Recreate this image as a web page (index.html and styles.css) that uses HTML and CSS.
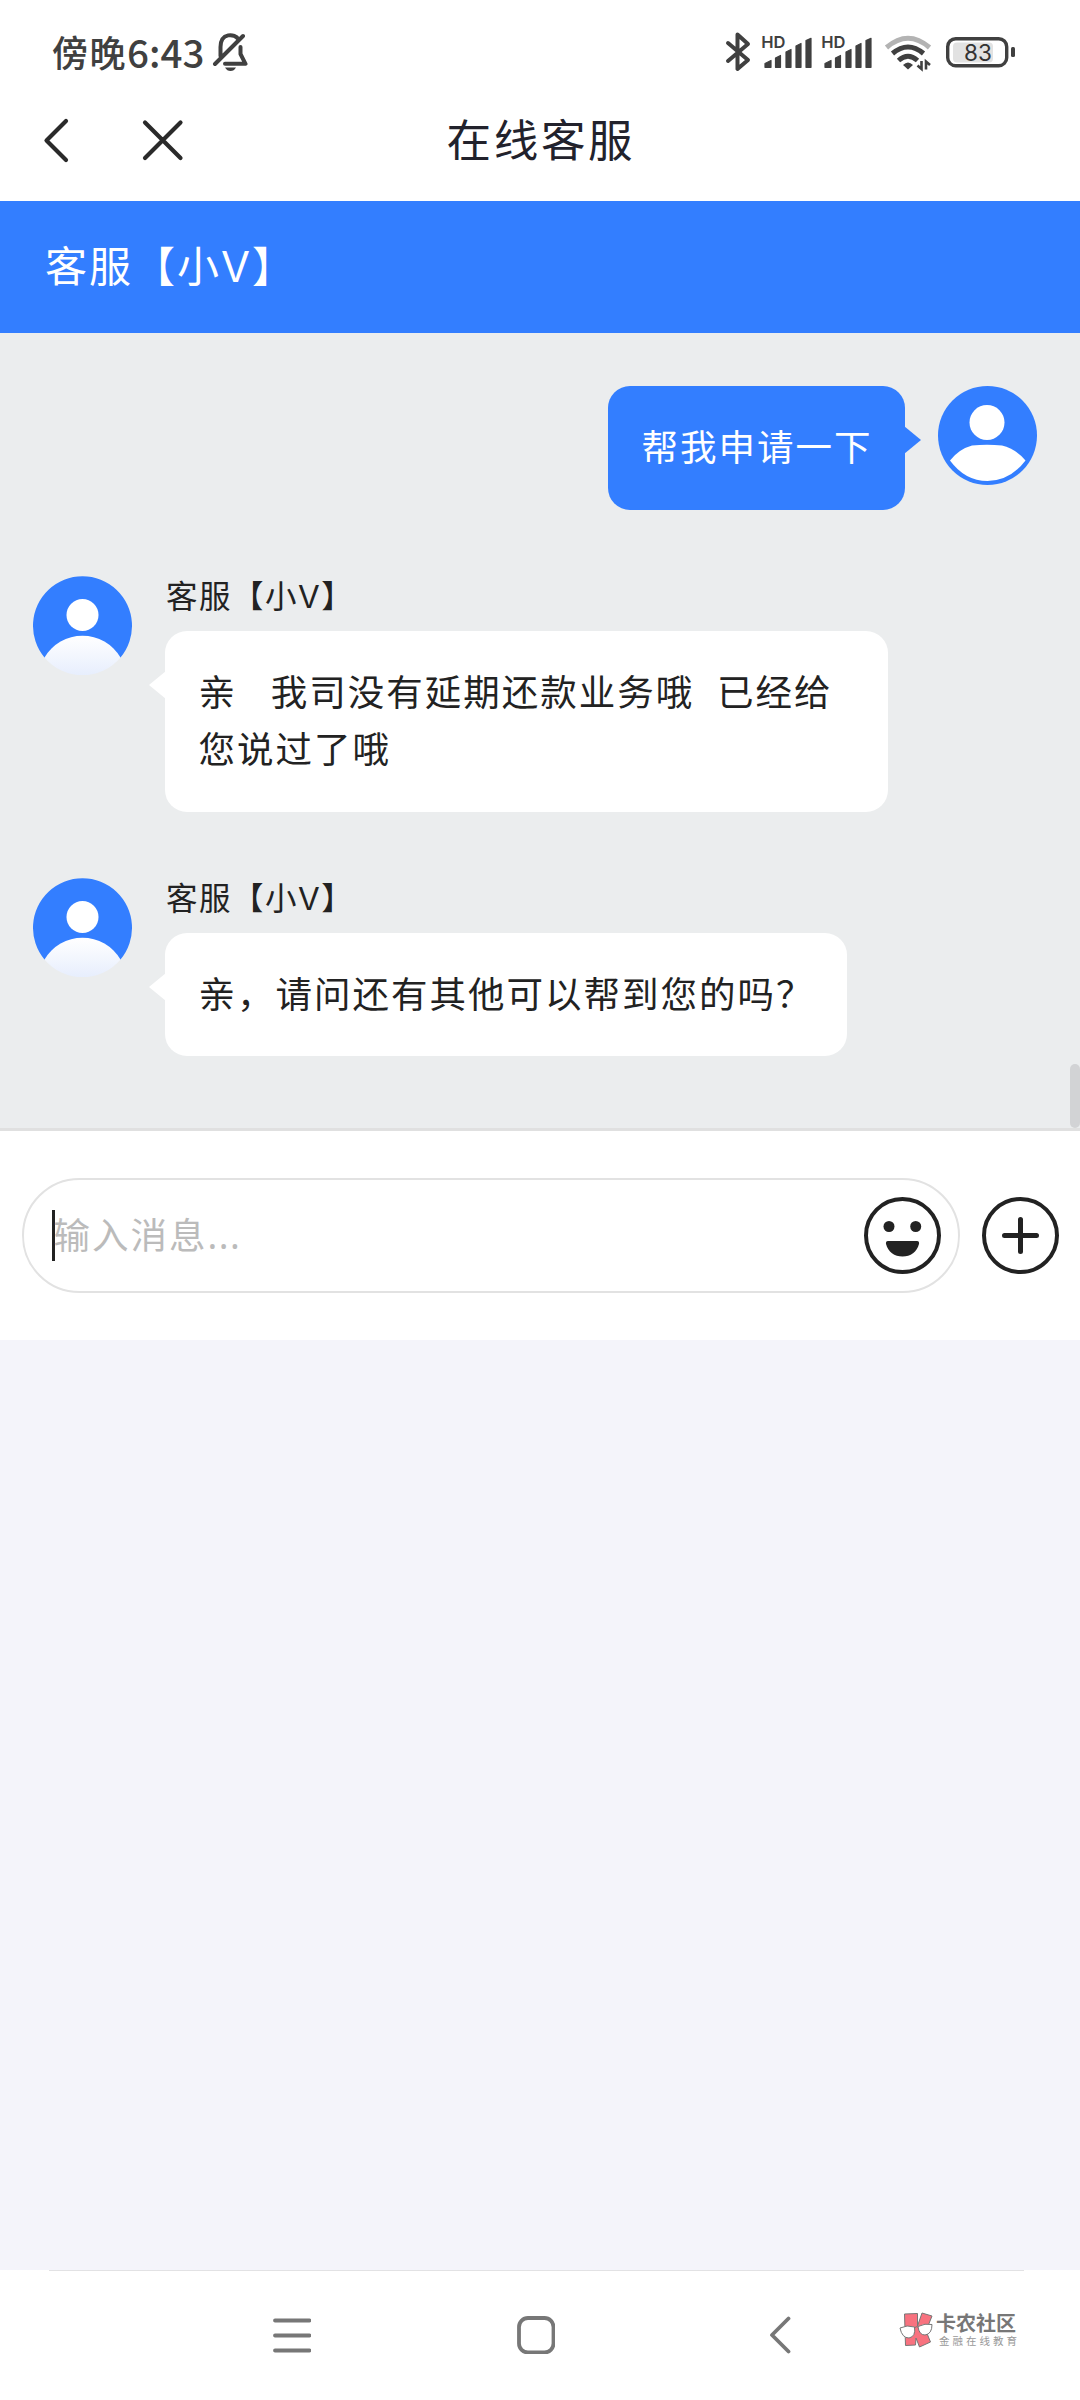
FILE: index.html
```
<!DOCTYPE html>
<html lang="zh-CN">
<head>
<meta charset="utf-8">
<title>在线客服</title>
<link rel="stylesheet" href="styles.css">
</head>
<body>
<div class="phone">
  <header class="status">
    <div class="clock"><span class="clock-zh">傍晚</span><span class="clock-num">6:43</span></div>
    <svg class="bell" width="36" height="40" viewBox="212 33 36 40" fill="none" stroke="#404040" stroke-width="4" stroke-linecap="round" stroke-linejoin="round">
      <path d="M220.500 56V47C220.500 32.500 235 33 238.500 39.500M240.500 47V54L245.500 63.800H225M215 64L243 36"/>
      <path d="M225 67.500H236Q234 71 230.500 71T225 67.500Z" fill="#404040" stroke="none"/>
    </svg>
    <div class="status-icons">
      <svg class="bt" width="26" height="42" viewBox="725 31 26 42" fill="none" stroke="#404040" stroke-width="4" stroke-linecap="round" stroke-linejoin="round"><path d="M728 43L748 60L737.500 69V34.500L748 44L728 61"/></svg>
      <svg class="signal" width="52" height="42" viewBox="761 31 52 42"><text x="761.200" y="48" class="hd">HD</text><path d="M765 67.300V63.500L771 60.500V67.300ZM775.500 67.300V58L780.500 55.500V67.300ZM786 67.300V52L791 49.500V67.300ZM796 67.300V46L801 43.500V67.300ZM806 67.300V40.500L811 38.300V67.300Z"/></svg>
      <svg class="signal" width="52" height="42" viewBox="761 31 52 42"><text x="761.200" y="48" class="hd">HD</text><path d="M765 67.300V63.500L771 60.500V67.300ZM775.500 67.300V58L780.500 55.500V67.300ZM786 67.300V52L791 49.500V67.300ZM796 67.300V46L801 43.500V67.300ZM806 67.300V40.500L811 38.300V67.300Z"/></svg>
      <svg class="wifi" width="50" height="42" viewBox="883 31 50 42" fill="none" stroke="#404040" stroke-width="5">
        <path d="M886.500 47.500Q908 29 929.500 47.500" stroke="#b3b3b3"/><path d="M892.500 53.500Q908 40.500 923.500 53.500M898.500 60.500Q908 52 917.500 60.500"/>
        <path d="M903 65Q908 60 913 65L908 69.500Z" fill="#404040" stroke="none"/>
        <path d="M921.500 61V69L917.500 65.500M926 69.500V61.500L930 65" stroke-width="2.600"/>
      </svg>
      <svg class="battery" width="72" height="42" viewBox="944 31 72 42"><rect x="953" y="42.500" width="40" height="20" rx="4" fill="#e2e2e2"/><rect x="947.700" y="38.700" width="59" height="27" rx="8" fill="none" stroke="#404040" stroke-width="3.400"/><rect x="1011" y="47" width="4" height="10" rx="1.500" fill="#404040"/><text x="978" y="60.500" text-anchor="middle" class="pct">83</text></svg>
    </div>
  </header>

  <nav class="nav">
    <svg class="nav-back" width="30" height="50" viewBox="42 115 30 50"><path d="M66 121L46.500 140.500L66 160"/></svg>
    <svg class="nav-close" width="44" height="44" viewBox="141 118 44 44"><path d="M145 122.500L180.500 158M180.500 122.500L145 158"/></svg>
    <h1 class="title">在线客服</h1>
  </nav>

  <div class="agent-bar">客服【小<span class="v">V</span>】</div>

  <main class="chat">
    <section class="msg mine">
      <div class="bubble">帮我申请一下</div>
      <svg class="avatar" viewBox="0 0 99 99"><circle cx="49.500" cy="49.500" r="49.500" fill="#337eff"/><circle cx="49" cy="36.500" r="17.500" fill="#fff"/><path d="M12 74.500Q21 63 34 59.500Q49 58 64 59.500Q78 63 87.500 74.500Q72 95 49.500 95Q27 95 12 74.500Z" fill="#fff"/></svg>
    </section>
    <section class="msg">
      <svg class="avatar" viewBox="0 0 99 99"><defs><linearGradient id="body" x1="0" y1="0" x2="0" y2="1"><stop offset="0" stop-color="#fff"/><stop offset="1" stop-color="#e7eefd"/></linearGradient></defs><path d="M11.500 81.500A49.500 49.500 0 1 1 87.500 81.500Z" fill="#337eff"/><circle cx="49.500" cy="39" r="16" fill="#fff"/><path d="M11.500 81.500A44 44 0 0 1 87.500 81.500A49.500 49.500 0 0 1 11.500 81.500Z" fill="url(#body)"/></svg>
      <div class="content"><div class="name">客服【小<span class="v">V</span>】</div><div class="bubble">亲   我司没有延期还款业务哦  已经给
您说过了哦</div></div>
    </section>
    <section class="msg">
      <svg class="avatar" viewBox="0 0 99 99"><path d="M11.500 81.500A49.500 49.500 0 1 1 87.500 81.500Z" fill="#337eff"/><circle cx="49.500" cy="39" r="16" fill="#fff"/><path d="M11.500 81.500A44 44 0 0 1 87.500 81.500A49.500 49.500 0 0 1 11.500 81.500Z" fill="url(#body)"/></svg>
      <div class="content"><div class="name">客服【小<span class="v">V</span>】</div><div class="bubble">亲，请问还有其他可以帮到您的吗？</div></div>
    </section>
    <div class="thumb"></div>
  </main>

  <div class="composer">
    <div class="field">
      <i class="caret"></i><span class="placeholder">输入消息<span class="dots">...</span></span>
      <svg class="round" viewBox="0 0 77 77"><circle cx="38.500" cy="38.500" r="36.500"/><g fill="#222" stroke="none"><circle cx="25" cy="29.500" r="5.500"/><circle cx="51.700" cy="29.500" r="5.500"/><path d="M24 44H53Q55.500 44 55 47C53 55 46.500 59.500 38.500 59.500S24 55 22 47Q21.500 44 24 44Z"/></g></svg>
    </div>
    <svg class="round" viewBox="0 0 77 77"><circle cx="38.500" cy="38.500" r="36.500"/><path d="M38.500 22.500V54.500M22.500 38.500H54.500" stroke-width="5"/></svg>
  </div>

  <div class="blank"></div>

  <footer class="sysbar">
    <svg class="s-menu" width="38" height="38" viewBox="0 0 38 38"><path d="M2 4.500H36.500M2 19.500H36.500M2 34.500H36.500"/></svg>
    <svg class="s-home" width="38" height="38" viewBox="0 0 38 38"><rect x="2" y="2" width="34.500" height="34.500" rx="9"/></svg>
    <svg class="s-back" width="22" height="38" viewBox="0 0 22 38"><path d="M19.500 2.500L3 19L19.500 35.500"/></svg>
    <div class="brand">
      <svg width="36" height="38" viewBox="0 0 36 38" fill="#f8727f" stroke="#777" stroke-width="1">
        <path d="M5.500 3L18.500 2.500V15L23 2L33 5L27 20L31.500 31L20.500 36L17 27L16.500 34L6.500 34.500Z"/>
        <path d="M1 17Q8 13.500 15.500 16Q17 25.500 10 27Q3 27 1 17ZM19 15.500Q26 12 33 13.500Q33 23 26 24Q20 24 19 15.500Z" fill="#fff"/><path d="M15.500 17Q17 15 19 16" fill="none"/>
      </svg>
      <div class="brand-text"><div class="brand-name">卡农社区</div><div class="brand-sub">金融在线教育</div></div>
    </div>
  </footer>
</div>
</body>
</html>
```
FILE: styles.css
```
* { box-sizing: border-box; }
body { margin: 0; background: #fff; font-family: "Noto Sans CJK SC", sans-serif; color: #222; }
svg { display: block; flex: none; }
.phone { width: 1080px; height: 2400px; display: flex; flex-direction: column; overflow: hidden; }

.status { height: 80px; padding: 31px 64px 0 52px; display: flex; align-items: flex-start; color: #404040; }
.clock { display: flex; line-height: 40px; width: 160px; font-weight: 500; white-space: nowrap; }
.clock-zh { font-size: 36px; letter-spacing: 1.500px; }
.clock-num { font-size: 38.500px; }
.bell { margin-top: 2px; }
.status-icons { margin-left: auto; display: flex; }
.signal { margin-left: 8px; fill: #404040; }
.signal path { stroke: #404040; stroke-width: 1.200; stroke-linejoin: round; }
.bt + .signal { margin-left: 10px; }
.wifi { margin-left: 10px; }
.battery { margin-left: 11px; }
.hd { font: 600 16.500px Inter, sans-serif; }
.pct { font: 400 22.500px Inter, sans-serif; fill: #333; }

.nav { height: 121px; display: flex; align-items: center; padding: 0 0 1px 42px; }
.nav svg { fill: none; stroke: #2a2a2a; stroke-width: 4.200; stroke-linecap: round; stroke-linejoin: round; }
.nav-close { margin-left: 69px; }
.title { margin: -5px 0 0 261.500px; font-size: 44.500px; font-weight: 400; letter-spacing: 2.700px; line-height: 60px; color: #22222c; }

.agent-bar { height: 132px; background: #337eff; color: #fff; font-size: 42px; letter-spacing: 2px; line-height: 126px; padding-left: 45px; }
.v { font-family: Inter, sans-serif; font-weight: 400; }

.chat { height: 798px; background: #ebedee; border-bottom: 3px solid #e0e0e0; position: relative; padding: 53px 33px 0; display: flex; flex-direction: column; align-items: flex-start; }
.msg { display: flex; gap: 33px; margin-bottom: 66px; }
.msg.mine { align-self: flex-end; margin-right: 10px; }
.avatar { width: 99px; height: 99px; }
.name { font-size: 31.500px; letter-spacing: 1.500px; line-height: 36px; height: 55px; padding-left: 1px; }
.bubble { position: relative; width: fit-content; padding: 31px 32.500px 35px 33.500px; border-radius: 22px; background: #fff; font-size: 36.500px; letter-spacing: 2px; word-spacing: 1.100px; line-height: 57.500px; white-space: pre; }
.msg:nth-child(2) .bubble { width: 723px; }
.bubble::before { content: ""; position: absolute; left: -16px; top: 40px; border: solid transparent; border-width: 14.500px 17px 14.500px 0; border-right-color: #fff; }
.mine .bubble { background: #337eff; color: #fff; }
.mine .bubble::before { left: auto; right: -16px; border-width: 14.500px 0 14.500px 17px; border-left-color: #337eff; }
.thumb { position: absolute; right: 0; top: 731px; width: 10px; height: 64px; border-radius: 5px; background: #d2d3d5; }

.composer { height: 209px; display: flex; align-items: center; gap: 22px; padding: 0 21px 0 22px; background: #fff; }
.field { flex: 1; height: 115px; border: 2px solid #e2e2e2; border-radius: 58px; display: flex; align-items: center; padding: 0 17px 0 28px; }
.caret { width: 3px; height: 51px; background: #222; }
.placeholder { flex: 1; margin: -3px 0 0 -1.500px; font-size: 36.500px; letter-spacing: 2px; color: #bbb; line-height: 54px; }
.dots { font-family: "Noto Sans", sans-serif; letter-spacing: 1.500px; }
.round { width: 77px; height: 77px; fill: none; stroke: #222; stroke-width: 4; stroke-linecap: round; }

.blank { flex: 1; background: #f4f4fa; }
.sysbar { height: 130px; display: flex; align-items: flex-start; padding: 46px 0 0 273px; background: linear-gradient(#e2e2e4, #e2e2e4) 49px 0 / 975px 1px no-repeat #fff; }
.sysbar > svg { fill: none; stroke: #777; stroke-width: 3.800; stroke-linecap: round; stroke-linejoin: round; }
.s-home { margin-left: 206px; }
.s-back { margin-left: 214px; }
.brand { display: flex; margin: -5px 0 0 108px; }
.brand-text { padding: 1px 0 0 1px; white-space: nowrap; }
.brand-name { font-size: 20px; font-weight: 700; line-height: 21px; color: #777; }
.brand-sub { font-size: 10.500px; letter-spacing: 3px; line-height: 15px; padding-left: 3px; color: #999; }
```
